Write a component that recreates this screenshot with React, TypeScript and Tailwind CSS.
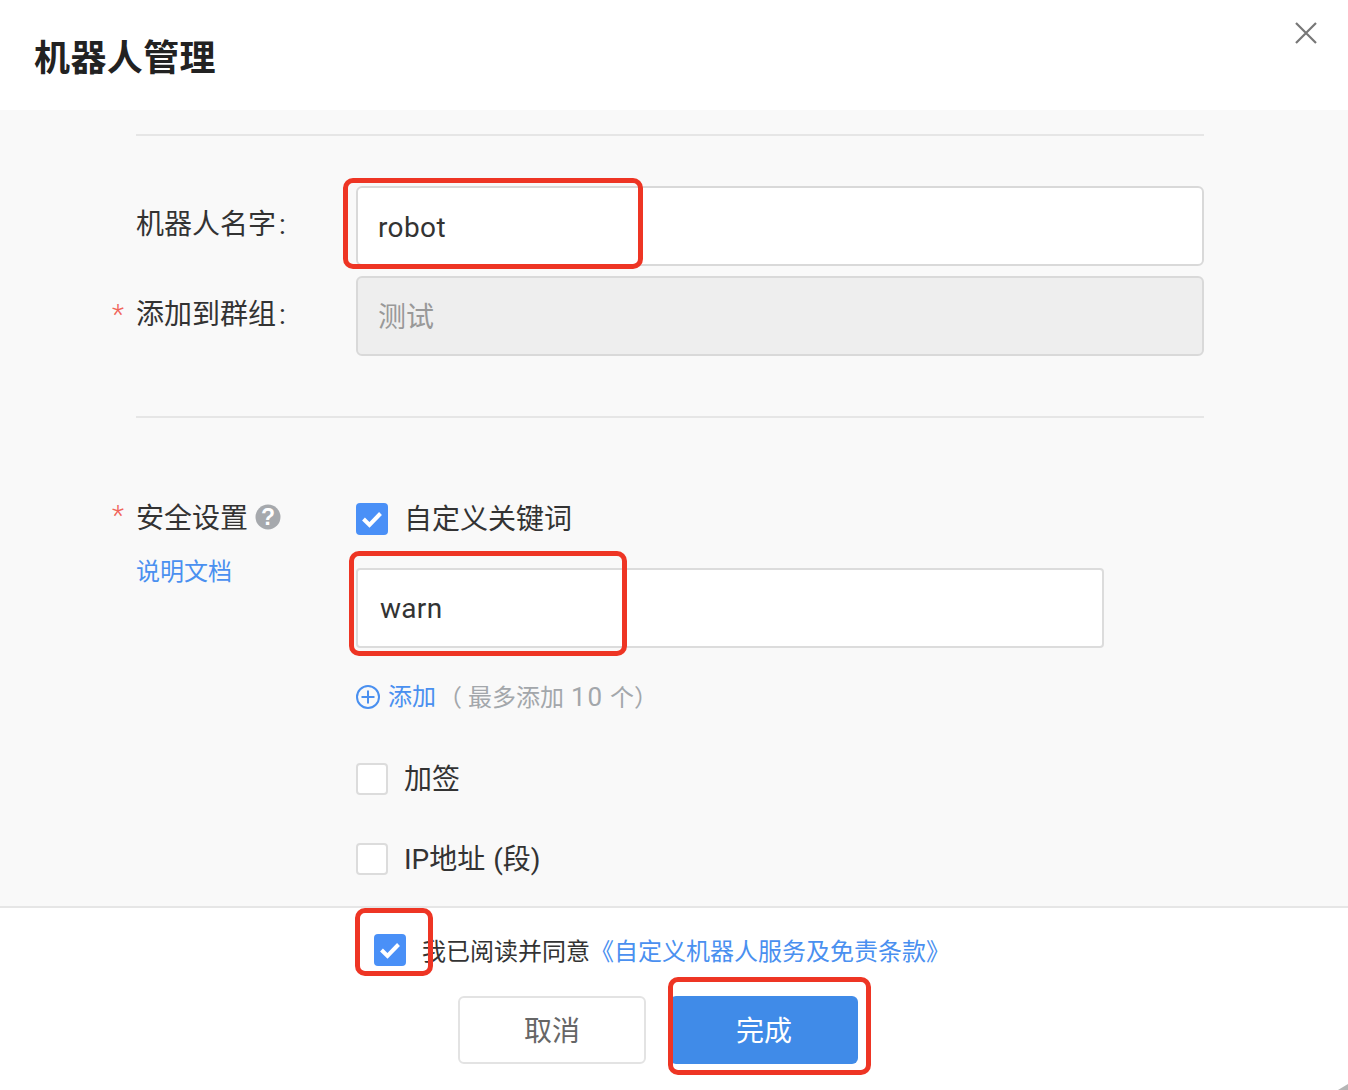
import React from "react";

const font = 'Roboto, "Noto Sans CJK SC", "Noto Sans", sans-serif';

function Check({ on }: { on?: boolean }) {
  return on ? (
    <span className="flex h-8 w-8 shrink-0 items-center justify-center rounded-[4px] bg-[#4a90f7]">
      <svg width="24" height="18" viewBox="0 0 24 18" fill="none">
        <path d="M3.5 9 L9.5 15 L20.5 3.5" stroke="#fff" strokeWidth="4" />
      </svg>
    </span>
  ) : (
    <span className="block h-8 w-8 shrink-0 rounded-[4px] border-2 border-[#dcdcdc] bg-white" />
  );
}

function Star({ className }: { className: string }) {
  return <span className={"absolute left-[-24px] text-[28px] font-light leading-[28px] text-[#f0645a] " + className}>*</span>;
}

function Mark({ className }: { className: string }) {
  return <div className={"pointer-events-none absolute rounded-[10px] border-[5px] border-[#ee3524] " + className} />;
}

export default function App() {
  return (
    <div className="relative flex h-[1090px] w-[1348px] flex-col overflow-hidden bg-white text-[#333]" style={{ fontFamily: font }}>
      <header className="relative flex h-[110px] shrink-0 items-center pt-[7px] pl-[34px]">
        <h1 className="text-[36px] font-bold leading-none tracking-[0.4px] text-[#222]">机器人管理</h1>
        <button className="absolute left-[1295px] top-[22px]" aria-label="close">
          <svg width="22" height="22" viewBox="0 0 22 22" stroke="#777" strokeWidth="2.2" fill="none" className="block">
            <path d="M1 1 L21 21 M21 1 L1 21" />
          </svg>
        </button>
      </header>

      <main className="h-[796px] shrink-0 bg-[#f9f9f9] pl-[136px] pr-[144px] pt-[24px]">
        <div className="h-[2px] bg-[#e6e6e6]" />

        <div className="mt-[50px] flex">
          <label className="w-[220px] pt-[19px] text-[28px] leading-[40px]">
            机器人名字<span className="ml-[3px]">:</span>
          </label>
          <input readOnly defaultValue="robot" className="h-20 w-[848px] rounded-[6px] border-2 border-[#d9d9d9] bg-white px-5 pt-[2px] text-[28px] tracking-[0.4px] text-[#333] outline-none" />
        </div>

        <div className="mt-[10px] flex">
          <label className="relative w-[220px] pt-[19px] text-[28px] leading-[40px]">
            <Star className="top-[25px]" />
            <span className="relative">
              添加到群组<span className="ml-[3px]">:</span>
            </span>
          </label>
          <input readOnly disabled defaultValue="测试" className="h-20 w-[848px] rounded-[6px] border-2 border-[#d9d9d9] bg-[#eeeeee] px-5 pb-[2px] text-[28px] text-[#999] outline-none" />
        </div>

        <div className="mt-[60px] h-[2px] bg-[#e6e6e6]" />

        <div className="mt-[85px] flex">
          <div className="w-[220px] shrink-0">
            <div className="relative flex h-8 items-center gap-2 text-[28px]">
              <Star className="top-[-1px]" />
              <span className="relative">安全设置</span>
              <svg width="26" height="26" viewBox="0 0 26 26" className="relative left-[-1px] top-[-2px]">
                <circle cx="13" cy="13" r="12.5" fill="#a6a9ad" />
                <text x="13" y="21" textAnchor="middle" fontSize="23" fontWeight="700" fill="#fff" fontFamily="Liberation Sans, sans-serif">?</text>
              </svg>
            </div>
            <a className="mt-[19px] block text-[24px] leading-[36px] text-[#4a90f0]">说明文档</a>
          </div>

          <div className="flex-1">
            <div className="flex h-8 items-center gap-4">
              <Check on />
              <span className="relative top-[1px] text-[28px]">自定义关键词</span>
            </div>
            <input readOnly defaultValue="warn" className="mt-[33px] block h-20 w-[748px] rounded-[4px] border-2 border-[#dcdcdc] bg-white px-[22px] pt-[1px] text-[28px] tracking-[0.3px] text-[#333] outline-none" />
            <div className="mt-[30px] flex h-[38px] items-center text-[24px]">
              <svg width="24" height="24" viewBox="0 0 24 24" fill="none" stroke="#4a90f0" strokeWidth="2">
                <circle cx="12" cy="12" r="11" />
                <path d="M12 5.5 V18.5 M5.5 12 H18.5" />
              </svg>
              <span className="ml-2 text-[#4a90f0]">添加</span>
              <span className="ml-[2px] whitespace-pre text-[#a3a7ab]">
                （ 最多添加<span className="[word-spacing:1px]"> </span><span className="text-[26px] tracking-[2px]">10</span><span> 个）</span>
              </span>
            </div>
            <div className="mt-[47px] flex h-8 items-center gap-4">
              <Check />
              <span className="relative top-[1px] text-[28px]">加签</span>
            </div>
            <div className="mt-[48px] flex h-8 items-center gap-4">
              <Check />
              <span className="relative top-[1px] text-[28px] [word-spacing:1px]">IP地址 (段)</span>
            </div>
          </div>
        </div>
      </main>

      <footer className="flex-1 border-t-2 border-[#e6e6e6] bg-white">
        <div className="mt-[26px] flex h-8 items-center justify-center pr-[24px] text-[24px]">
          <Check on />
          <span className="relative top-[2px] ml-4">我已阅读并同意</span>
          <a className="relative top-[2px] text-[#4a90f0]">《自定义机器人服务及免责条款》</a>
        </div>
        <div className="mt-[30px] flex justify-center gap-6 pr-[32px]">
          <button className="h-[68px] w-[188px] rounded-[6px] border-2 border-[#e3e3e3] bg-white pt-[3px] text-[28px] text-[#666]">取消</button>
          <button className="h-[68px] w-[188px] rounded-[6px] bg-[#408be8] pt-[3px] text-[28px] text-white">完成</button>
        </div>
      </footer>

      <Mark className="left-[343px] top-[178px] h-[91px] w-[300px]" />
      <Mark className="left-[349px] top-[551px] h-[105px] w-[278px]" />
      <Mark className="left-[355px] top-[908px] h-[68px] w-[78px]" />
      <Mark className="left-[668px] top-[977px] h-[98px] w-[203px]" />

      <svg className="absolute bottom-0 right-0" width="10" height="6" viewBox="0 0 10 6">
        <path d="M10 0 V6 H0 Z" fill="#b5b5b5" />
      </svg>
    </div>
  );
}
